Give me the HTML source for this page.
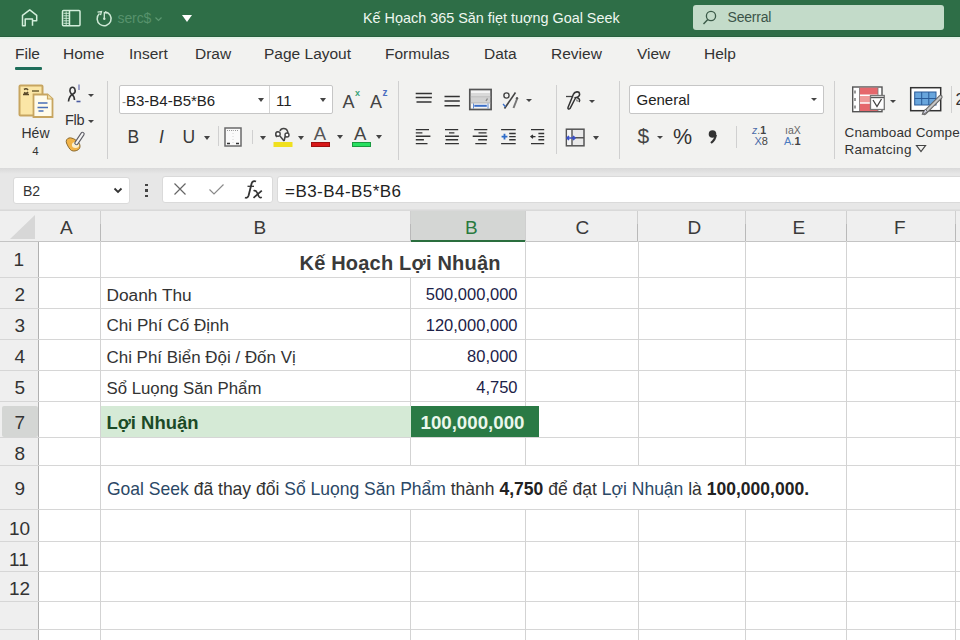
<!DOCTYPE html>
<html><head><meta charset="utf-8">
<style>
*{margin:0;padding:0;box-sizing:border-box}
html,body{width:960px;height:640px;overflow:hidden;background:#fff;font-family:"Liberation Sans",sans-serif;color:#333}
.a{position:absolute;white-space:nowrap;line-height:normal}
#titlebar{left:0;top:0;width:960px;height:37px;background:#2e6e47}
#tabsbar{left:0;top:37px;width:960px;height:131px;background:#f2f2f0}
#band{left:0;top:168px;width:960px;height:43px;background:#e7e7e7}
.tab{font-size:15.5px;color:#333;top:44.7px}
.box{background:#fff;border:1px solid #c9c9c9;border-radius:2px}
.sep{width:1px;background:#d0d0d0}
.arr{width:0;height:0;border-left:3.5px solid transparent;border-right:3.5px solid transparent;border-top:4px solid #444}
.chb{top:211px;height:31px;background:#efefef;border-right:1px solid #cfcfcf;border-bottom:1px solid #c4c4c4}
.chl{top:216.6px;font-size:19px;color:#3a3a3a}
.rh{left:0;width:39px;background:#efefef;border-right:1px solid #bdbdbd;border-bottom:1px solid #d4d4d4}
.rn{font-size:19px;color:#333}
.hl{left:0;width:960px;height:1px;background:#d6d6d6}
.vl{width:1px;background:#d3d3d3}
.cell{font-size:17.3px;color:#333}
.val{font-size:16.5px;color:#1c2248}
</style></head><body>
<!-- TITLE BAR -->
<div class="a" id="titlebar"></div>
<!-- home icon -->
<svg class="a" style="left:0;top:0" width="90" height="37" viewBox="0 0 90 37">
 <path d="M32.5 20.75H36.7V15.3L29.75 9.9L22.5 15.3V25.75H25.2V19.1H32.5V25.75" fill="none" stroke="#d3eedb" stroke-width="1.5" stroke-linejoin="round"/>
 <rect x="62.5" y="10.5" width="17.5" height="15.2" rx="1" fill="none" stroke="#d3eedb" stroke-width="1.5"/>
 <path d="M69.5 10.5V25.7" stroke="#d3eedb" stroke-width="1.5"/>
 <path d="M66.2 11.5V25" stroke="#d3eedb" stroke-width="0.9"/>
 <path d="M63.5 13.3h5.5M63.5 15.8h5.5M63.5 18.3h5.5M63.5 20.8h5.5M63.5 23.3h5.5" stroke="#d3eedb" stroke-width="0.9"/>
</svg>
<!-- clock icon -->
<svg class="a" style="left:92px;top:6px" width="76" height="24" viewBox="0 0 76 24">
 <path d="M7.5 7.5A7 7 0 1 0 13 5.8" fill="none" stroke="#cfe9d6" stroke-width="1.5"/>
 <path d="M5.5 6.2L9.5 5.5L8.5 9.2" fill="none" stroke="#cfe9d6" stroke-width="1.3"/>
 <path d="M12.3 12.7V6.5L15.5 7.2" fill="none" stroke="#cfe9d6" stroke-width="1.3"/>
 <circle cx="12.3" cy="12.7" r="1.2" fill="#cfe9d6"/>
 <path d="M63.5 11.5L66.5 14.5L69.5 11.5" fill="none" stroke="#5d9872" stroke-width="1.2"/>
</svg>
<div class="a" style="left:117.5px;top:9.5px;font-size:14px;letter-spacing:-0.1px;color:#57926c">serc$</div>
<div class="a" style="left:182px;top:15px;width:0;height:0;border-left:5.5px solid transparent;border-right:5.5px solid transparent;border-top:7px solid #fff"></div>
<div class="a" id="ttl" style="left:363px;top:9.9px;font-size:14.4px;color:#eef7f0">Kế Họach 365 Săn fiẹt tuợng Goal Seek</div>
<div class="a" style="left:693px;top:5px;width:251px;height:25px;background:#c3dbc9;border-radius:3px"></div>
<svg class="a" style="left:702px;top:10px" width="16" height="15" viewBox="0 0 16 15"><circle cx="9" cy="6" r="4.6" fill="none" stroke="#3b5a48" stroke-width="1.3"/><path d="M5.8 9.5L1.5 14" stroke="#3b5a48" stroke-width="1.4"/></svg>
<div class="a" id="srch" style="left:727.5px;top:9.2px;font-size:14px;letter-spacing:-0.2px;color:#3b5448">Seerral</div>

<!-- TABS + RIBBON -->
<div class="a" id="tabsbar"></div>
<div class="a" style="left:0;top:35.5px;width:960px;height:2px;background:#27613e"></div>
<div class="a" style="left:0;top:37px;width:960px;height:2px;background:#e4f2e8"></div>
<div class="a tab" id="tFile" style="left:15px">File</div>
<div class="a" style="left:15px;top:67px;width:27px;height:3px;background:#1f6e5a;border-radius:1px"></div>
<div class="a tab" id="tHome" style="left:63px">Home</div>
<div class="a tab" id="tIns" style="left:129px">Insert</div>
<div class="a tab" id="tDraw" style="left:195px">Draw</div>
<div class="a tab" id="tPL" style="left:264px">Page Layout</div>
<div class="a tab" id="tForm" style="left:385px">Formulas</div>
<div class="a tab" id="tData" style="left:484px">Data</div>
<div class="a tab" id="tRev" style="left:551px">Review</div>
<div class="a tab" id="tView" style="left:637px">View</div>
<div class="a tab" id="tHelp" style="left:704px">Help</div>
<!-- Clipboard group -->
<svg class="a" style="left:17px;top:83px" width="40" height="37" viewBox="0 0 40 37">
 <rect x="2.5" y="2.5" width="23" height="30" rx="1" fill="#fbe6a6" stroke="#c7a560" stroke-width="2"/>
 <path d="M7 6.5c1.5-1 3-1 4 0.5M7 9.5c1.5 1 3 1 4-0.5M6 11.5h6" stroke="#5a4a2a" stroke-width="1.6" fill="none"/>
 <path d="M15 8h7" stroke="#7a6a3a" stroke-width="1.6"/>
 <path d="M16.5 11.5H30.5L35.5 16V34H16.5Z" fill="#fffbea" stroke="#c7a560" stroke-width="1.8"/>
 <path d="M30.5 11.5V16H35.5" fill="#f4e2a8" stroke="#c7a560" stroke-width="1.2"/>
 <path d="M21 20h9.5M20.5 24.5h10.5M21.5 28h5" stroke="#4a70b8" stroke-width="1.6"/>
</svg>
<div class="a" id="hew" style="left:21.5px;top:124.5px;font-size:14px;color:#333">Héw</div>
<div class="a" style="left:32.3px;top:144.5px;font-size:11.5px;color:#333">4</div>
<svg class="a" style="left:62px;top:82px" width="24" height="24" viewBox="0 0 24 24">
 <path d="M6.5 19.5C7 15 9 13 11 12C13 11 13.5 9 13 7.5C12.5 5.5 10.5 5 9.5 5.5C7.5 6.5 7.5 10 9 11.5C11 13 12.5 14 12.5 18" fill="none" stroke="#333" stroke-width="1.6"/>
 <path d="M17 2.5V8" stroke="#7a80b8" stroke-width="1.4"/>
 <path d="M14.5 19.5h4" stroke="#4a5aa0" stroke-width="1.6"/>
</svg>
<div class="a arr" style="left:87.5px;top:93.8px;border-top-width:3.5px"></div>
<div class="a" id="flb" style="left:65px;top:112px;font-size:14.5px;color:#333;letter-spacing:-0.3px">Flb</div>
<div class="a arr" style="left:87.5px;top:119.8px;border-top-width:3.5px"></div>
<svg class="a" style="left:62px;top:130px" width="26" height="26" viewBox="0 0 26 26">
 <path d="M4.5 13C3.5 10.5 5 8.5 7 8C9 7.5 11 8.5 13 9.5L16.5 12.5C18.5 14.5 18.5 18 16.5 19.5C14.5 21 11.5 21.5 9.5 20.5C7.5 19.5 5.5 15.5 4.5 13Z" fill="#f2b448" stroke="#8a6a30" stroke-width="1"/>
 <ellipse cx="13.5" cy="15" rx="3.6" ry="3" fill="#fbefcf"/>
 <path d="M14.5 13L20.5 4" stroke="#5e5e66" stroke-width="4.4" stroke-linecap="round"/>
 <path d="M14.5 13L20.5 4" stroke="#f4f4f4" stroke-width="2.2" stroke-linecap="round"/>
</svg>
<div class="a sep" style="left:107px;top:81px;height:78px;background:#cfcfcf"></div>

<!-- Font group -->
<div class="a" style="left:118.5px;top:85.3px;width:214px;height:28.5px;background:#fff;border:1px solid #c6c6c6;border-radius:2px"></div>
<div class="a" style="left:269px;top:86px;width:1px;height:27px;background:#d4d4d4"></div>
<div class="a" id="fnt" style="left:122px;top:92px;font-size:15px;color:#222"><span style="color:#888;font-size:12px">-</span>B3-B4-B5*B6</div>
<div class="a arr" style="left:257.5px;top:98px;border-left-width:3.5px;border-right-width:3.5px;border-top-width:4px"></div>
<div class="a" id="sz" style="left:276px;top:92px;font-size:15px;color:#222">11</div>
<div class="a arr" style="left:320px;top:98px"></div>
<div class="a" style="left:342.5px;top:92.3px;font-size:18px;color:#444">A</div>
<div class="a" style="left:355px;top:88px;font-size:9px;color:#3aa37a;font-weight:bold">x</div>
<div class="a" style="left:370px;top:92.3px;font-size:18px;color:#444">A</div>
<div class="a" style="left:382.5px;top:87px;font-size:10px;color:#4a6ec0;font-weight:bold">z</div>
<div class="a" style="left:127.5px;top:127px;font-size:17.5px;color:#3a3a3a">B</div>
<div class="a" style="left:159px;top:127px;font-size:17.5px;color:#3a3a3a;font-style:italic">I</div>
<div class="a" style="left:182.5px;top:127px;font-size:17.5px;color:#3a3a3a">U</div>
<div class="a arr" style="left:203.5px;top:136px;border-left-width:3.6px;border-right-width:3.6px;border-top-width:4.5px"></div>
<div class="a sep" style="left:218px;top:126px;height:20px"></div>
<svg class="a" style="left:224px;top:126.5px" width="18" height="20" viewBox="0 0 18 20">
 <rect x="1" y="1" width="16" height="18" fill="#fafafa" stroke="#6a6a6a" stroke-width="1.5"/>
 <path d="M3 3.5h12" stroke="#999" stroke-width="1" stroke-dasharray="1 1"/>
 <path d="M9 3v14" stroke="#ccc" stroke-width="0.8" stroke-dasharray="1 2"/>
 <path d="M3 16.5h3M12 16.5h3" stroke="#333" stroke-width="1.5"/>
</svg>
<div class="a sep" style="left:252px;top:130px;height:14px"></div>
<div class="a arr" style="left:260px;top:135.8px;border-left-width:3.4px;border-right-width:3.4px;border-top-width:4.2px"></div>
<svg class="a" style="left:273px;top:127px" width="20" height="21" viewBox="0 0 20 21">
 <path d="M4 10C2 8 3 5 5 5M7 4C8 1 13 0.5 14.5 4C15.5 6 14 9 12 10L11 14" fill="none" stroke="#444" stroke-width="1.6"/>
 <circle cx="5" cy="7" r="2.2" fill="#fff" stroke="#444" stroke-width="1.4"/>
 <circle cx="14" cy="8" r="2" fill="#fff" stroke="#444" stroke-width="1.4"/>
 <path d="M7 9L11 14" stroke="#444" stroke-width="1.4"/>
 <rect x="0.5" y="15" width="19" height="5" fill="#f0e01e"/>
</svg>
<div class="a arr" style="left:297.5px;top:136px;border-left-width:3.3px;border-right-width:3.3px;border-top-width:4px"></div>
<div class="a" style="left:313.8px;top:122.5px;font-size:18.5px;color:#555">A</div>
<div class="a" style="left:311px;top:141.8px;width:19px;height:5px;background:#d81818;border:0.5px solid #a01010"></div>
<div class="a arr" style="left:336.8px;top:135.3px;border-left-width:3.3px;border-right-width:3.3px;border-top-width:4px"></div>
<div class="a" style="left:354px;top:122.5px;font-size:18.5px;color:#444">A</div>
<div class="a" style="left:352px;top:141.8px;width:18.7px;height:5px;background:#28e060;border:0.5px solid #1a9a40"></div>
<div class="a arr" style="left:376.3px;top:135.3px;border-left-width:3.3px;border-right-width:3.3px;border-top-width:4px"></div>
<div class="a sep" style="left:398px;top:81px;height:79px"></div>

<!-- Alignment group -->
<svg class="a" style="left:414px;top:86px" width="122" height="26" viewBox="414 86 122 26">
 <path d="M415.7 93.5h16.2M415.7 97.5h16.2M416.5 101.9h15" stroke="#333" stroke-width="1.5"/>
 <path d="M444.5 96.5h15.3M444.5 100.9h15.3M444.5 105.7h15.3" stroke="#333" stroke-width="1.5"/>
 <rect x="469.8" y="89.5" width="21.3" height="20" fill="#f4f4f4" stroke="#555" stroke-width="1.7"/>
 <rect x="471" y="93" width="19" height="4" fill="#d9d9d9"/>
 <rect x="471" y="97.5" width="19" height="5.5" fill="#d2d2d2"/>
 <path d="M470.5 97h20M470.5 103h20" stroke="#aaa" stroke-width="0.8"/>
 <path d="M474.3 105.8h12.5" stroke="#3a6ec8" stroke-width="2"/>
 <path d="M473.5 103.5v5M488 103.5v5" stroke="#3a6ec8" stroke-width="0.8"/>
 <path d="M486 101l1.5-2.5" stroke="#888" stroke-width="1.4"/>
 <circle cx="506.5" cy="95.5" r="2.6" fill="none" stroke="#444" stroke-width="1.4"/>
 <path d="M515.5 92.5L504.5 108.5" stroke="#444" stroke-width="1.6"/>
 <path d="M503 104c1 1 2 2 2.5 3" stroke="#3a6ec8" stroke-width="1.3" fill="none"/>
 <path d="M517 99l-3.5 9" stroke="#777" stroke-width="2"/>
 <circle cx="517" cy="98.3" r="1.2" fill="#555"/>
</svg>
<div class="a arr" style="left:525.8px;top:99.2px;border-left-width:3.4px;border-right-width:3.4px;border-top-width:3.8px"></div>
<svg class="a" style="left:414px;top:127px" width="134" height="19" viewBox="414 127 134 19">
 <g stroke="#333" stroke-width="1.4">
 <path d="M415.8 129.6h13.2M415.8 132.9h6.6M415.8 136.3h14.6M415.8 139.8h8.1M415.8 143.6h11.7"/>
 <path d="M445 129.6h13.2M449 132.9h5.4M445 136.3h13.9M445.7 139.8h12.4M445 143.6h13.9"/>
 <path d="M474.2 129.6h13.1M478.5 132.9h8M472.7 136.3h14.6M478.2 139.8h8.7M475.3 143.6h11.2"/>
 <path d="M501.1 129.6h14.6M509.2 133.5h6.5M509.2 136.6h6.5M509.2 139.8h6.5M501.1 143.6h14.6"/>
 <path d="M531 129.6h13.2M538.4 133.5h5.8M538.4 136.6h5.8M538.4 139.8h5.8M531 143.6h13.2"/>
 </g>
 <path d="M501.6 136.6h5.8M504.5 133.7v5.8" stroke="#2e6cc8" stroke-width="1.8"/>
 <path d="M531 136.6h4.5M533 135l-2 1.6 2 1.6" stroke="#333" stroke-width="1.3" fill="none"/>
</svg>
<div class="a sep" style="left:555.5px;top:85px;height:69px"></div>
<svg class="a" style="left:564px;top:90px" width="20" height="22" viewBox="0 0 20 22">
 <path d="M2 6.5h6" stroke="#444" stroke-width="1.3"/>
 <path d="M9.5 4C11 1.5 15 1 15.5 3.5C16 5.5 14 7 12.5 7.5C15 8 16.5 10 15 12" fill="none" stroke="#333" stroke-width="1.6"/>
 <path d="M9.5 4L4 17.5C3.5 19 5 19.5 6 18.5L12 7" fill="none" stroke="#333" stroke-width="1.5"/>
 <path d="M12.5 9.5L13.5 11.5" stroke="#777" stroke-width="1.4"/>
</svg>
<div class="a arr" style="left:588.5px;top:99.5px;border-left-width:3.3px;border-right-width:3.3px;border-top-width:3.6px"></div>
<svg class="a" style="left:564.5px;top:127.5px" width="20" height="19" viewBox="0 0 20 19">
 <rect x="1.4" y="1.2" width="17.6" height="16.6" fill="#e9e9e9" stroke="#555" stroke-width="1.5"/>
 <rect x="2.2" y="2" width="5" height="15" fill="#f5f5f5"/>
 <path d="M7 1.2V17.8M7 9.8H19" stroke="#555" stroke-width="1.4"/>
 <path d="M2 10h8M4 8l-2 2 2 2M8 8l2 2-2 2" stroke="#3a50c8" stroke-width="1.6" fill="none"/>
</svg>
<div class="a arr" style="left:593px;top:136px;border-left-width:3.5px;border-right-width:3.5px;border-top-width:4px"></div>
<div class="a sep" style="left:619px;top:81px;height:78px"></div>

<!-- Number group -->
<div class="a" style="left:629.2px;top:85.3px;width:195px;height:29px;background:#fff;border:1px solid #c6c6c6;border-radius:2px"></div>
<div class="a" id="gen" style="left:636.5px;top:91.2px;font-size:15px;color:#222">General</div>
<div class="a arr" style="left:810.6px;top:98.3px;border-left-width:3.5px;border-right-width:3.5px;border-top-width:3.8px"></div>
<div class="a" style="left:637.5px;top:124px;font-size:21px;color:#444">$</div>
<div class="a arr" style="left:656.7px;top:136px;border-left-width:3.2px;border-right-width:3.2px;border-top-width:3.6px"></div>
<div class="a" style="left:673px;top:125.3px;font-size:21.5px;letter-spacing:-0.5px;color:#333">%</div>
<svg class="a" style="left:707px;top:129px" width="12" height="16" viewBox="0 0 12 16"><circle cx="5.5" cy="5" r="3.8" fill="#333"/><path d="M8.8 5.8C8.5 9 7 11.5 4 14" stroke="#333" stroke-width="2.2" fill="none"/></svg>
<div class="a sep" style="left:735.5px;top:126px;height:22px"></div>
<div class="a" style="left:752px;top:125px;font-size:10.5px;line-height:10px;color:#4a6aa8;font-style:italic">z<span style="color:#666;font-style:normal">.</span><span style="color:#444;font-style:normal;font-weight:bold">1</span></div>
<div class="a" style="left:754.5px;top:136px;font-size:11px;line-height:11px;color:#4a6aa8">X<span style="color:#444">8</span></div>
<div class="a" style="left:785px;top:125px;font-size:10.5px;line-height:10px;color:#666">ıaX</div>
<div class="a" style="left:784px;top:136px;font-size:11px;line-height:11px;color:#4a7ac0">A<span style="color:#444">.</span><span style="color:#444;font-weight:bold">1</span></div>
<div class="a sep" style="left:834px;top:81px;height:78px"></div>

<!-- Styles group -->
<svg class="a" style="left:851px;top:85px" width="36" height="28" viewBox="0 0 36 28">
 <rect x="1.7" y="2" width="29.3" height="24.7" fill="#fff" stroke="#555" stroke-width="1.4"/>
 <rect x="8.5" y="2.7" width="18.5" height="23.3" fill="#e5676c"/><rect x="8.5" y="10.5" width="18.5" height="7.5" fill="#ef9a9a"/>
 <path d="M8.5 10.3h18.5M8.5 18h18.5" stroke="#fff" stroke-width="1.5"/>
 <path d="M8.5 2.7V26M27 2.7V26" stroke="#777" stroke-width="0.8"/>
 <path d="M4 5.5v3M4 13v3M4 20.5v3" stroke="#555" stroke-width="1.2"/>
 <rect x="19.5" y="10.5" width="13.8" height="14" fill="#fff" stroke="#777" stroke-width="1.3"/>
 <path d="M20 12.5h13" stroke="#555" stroke-width="1.4"/>
 <path d="M22 15l4 6.5l4.5-7.5" fill="none" stroke="#444" stroke-width="1.3"/>
</svg>
<div class="a arr" style="left:890.2px;top:99.5px;border-left-width:3.4px;border-right-width:3.4px;border-top-width:3.6px"></div>
<svg class="a" style="left:908px;top:85px" width="36" height="31" viewBox="0 0 36 31">
 <rect x="2.7" y="2.7" width="30" height="23" fill="#fff" stroke="#333" stroke-width="1.5"/>
 <rect x="6.7" y="7" width="21.3" height="13" fill="#68a5dc" stroke="#2a5a98" stroke-width="1"/>
 <path d="M13.7 7v13M20.8 7v13M6.7 13.5h21.3" stroke="#2a5a98" stroke-width="1"/>
 <path d="M32.5 12L16.5 28" stroke="#666" stroke-width="4.2" stroke-linecap="round"/>
 <path d="M32.5 12L16.5 28" stroke="#c8c8c8" stroke-width="2.2" stroke-linecap="round"/>
 <path d="M17.5 24L14 29.5L19.5 27Z" fill="#d8d8e8" stroke="#555" stroke-width="0.8"/>
</svg>
<div class="a sep" style="left:951px;top:86px;height:27px"></div>
<div class="a" style="left:955.5px;top:91px;font-size:16px;color:#333">2</div>
<div class="a" id="cn" style="left:844.5px;top:124.5px;font-size:13.5px;color:#333;letter-spacing:0.15px">Cnamboad Compe</div>
<div class="a" id="ram" style="left:844.5px;top:141.5px;font-size:13.5px;color:#333;letter-spacing:0.3px">Ramatcing</div>
<svg class="a" style="left:915px;top:144px" width="12" height="9" viewBox="0 0 12 9"><path d="M1.5 1.5h9L6 7.5Z" fill="none" stroke="#444" stroke-width="1.2"/></svg>


<!-- GRAY BAND + FORMULA BAR -->
<div class="a" id="band"></div>
<div class="a" style="left:0;top:168px;width:960px;height:6px;background:linear-gradient(#d9d9d9,#e7e7e7)"></div>
<div class="a box" style="left:13px;top:176.5px;width:117px;height:27px;border-color:#dadada;border-radius:3px"></div>
<div class="a" id="nb" style="left:23px;top:183.4px;font-size:14px;color:#333">B2</div>
<svg class="a" style="left:113px;top:187px" width="10" height="7" viewBox="0 0 10 7"><path d="M1.5 1.5L5 5L8.5 1.5" fill="none" stroke="#333" stroke-width="1.8"/></svg>
<div class="a" style="left:145px;top:183.7px;width:3px;height:2.5px;background:#444"></div>
<div class="a" style="left:145px;top:189.2px;width:3px;height:2.5px;background:#444"></div>
<div class="a" style="left:145px;top:194.7px;width:3px;height:2.5px;background:#444"></div>
<div class="a box" style="left:162px;top:176px;width:111px;height:27px;border-color:#dadada;border-radius:3px"></div>
<svg class="a" style="left:173px;top:182px" width="14" height="14" viewBox="0 0 14 14"><path d="M1.5 1.5L12.5 12.5M12.5 1.5L1.5 12.5" stroke="#666" stroke-width="1.2"/></svg>
<svg class="a" style="left:208px;top:183px" width="17" height="13" viewBox="0 0 17 13"><path d="M1.5 6.5L6 11L15.5 1.5" fill="none" stroke="#8a8a8a" stroke-width="1.2"/></svg>
<svg class="a" style="left:240px;top:178px" width="26" height="24" viewBox="0 0 26 24">
 <path d="M5 19.5C6.5 20.3 8 19.5 8.6 17.5L11.6 5.5C12.2 3.5 14 2.5 16 3.5" fill="none" stroke="#333" stroke-width="1.8"/>
 <path d="M7.5 8.3h6.5" stroke="#333" stroke-width="1.3"/>
 <path d="M13.5 12.8C15 12.2 16.2 12.8 17 14.5L18.8 18.3C19.5 19.6 20.6 19.9 21.8 19.3" fill="none" stroke="#333" stroke-width="1.7"/>
 <path d="M21.8 12.6L13.5 19.8" stroke="#333" stroke-width="1.7"/>
</svg>
<div class="a box" style="left:277px;top:176px;width:690px;height:27px;border-color:#dadada;border-radius:3px"></div>
<div class="a" id="fx" style="left:285px;top:182.1px;font-size:17px;letter-spacing:0.45px;color:#222">=B3-B4-B5*B6</div>

<!-- COLUMN HEADERS -->
<div class="a" style="left:0;top:211px;width:39px;height:31px;background:#efefef;border-right:1px solid #c8c8c8;border-bottom:1px solid #c4c4c4"></div>
<svg class="a" style="left:9px;top:214px" width="27" height="26" viewBox="0 0 27 26"><path d="M26 1V25H1Z" fill="#d7d7d7"/></svg>
<div class="a chb" style="left:38px;width:63px"></div>
<div class="a chb" style="left:101px;width:310px"></div>
<div class="a chb" style="left:411px;width:115px;background:#d4d6d4;border-bottom:2px solid #2a6e3e"></div>
<div class="a chb" style="left:526px;width:112px"></div>
<div class="a chb" style="left:638px;width:108px"></div>
<div class="a chb" style="left:746px;width:101px"></div>
<div class="a chb" style="left:847px;width:109px"></div>
<div class="a chb" style="left:956px;width:10px"></div>
<div class="a" style="left:0;top:209px;width:960px;height:2px;background:linear-gradient(#e2e2e2,#d6d6d6)"></div>
<div class="a" style="left:100px;top:224px;width:1px;height:17px;background:#b9b9b9"></div>
<div class="a" style="left:410px;top:224px;width:1px;height:17px;background:#b9b9b9"></div>
<div class="a" style="left:637px;top:224px;width:1px;height:17px;background:#b9b9b9"></div>
<div class="a" style="left:745px;top:224px;width:1px;height:17px;background:#b9b9b9"></div>
<div class="a" style="left:846px;top:224px;width:1px;height:17px;background:#b9b9b9"></div>
<div class="a" style="left:955px;top:224px;width:1px;height:17px;background:#b9b9b9"></div>
<div class="a chl" style="left:60px">A</div>
<div class="a chl" style="left:253.5px">B</div>
<div class="a chl" style="left:465px;color:#2a7a3e">B</div>
<div class="a chl" style="left:575.5px">C</div>
<div class="a chl" style="left:687.5px">D</div>
<div class="a chl" style="left:792.5px">E</div>
<div class="a chl" style="left:894px">F</div>

<!-- ROW HEADERS -->
<div class="a" style="left:0;top:242px;width:39px;height:398px;background:#efefef;border-right:1px solid #b0b0b0"></div>
<div class="a" style="left:1.5px;top:406px;width:36.5px;height:31px;background:#d4d6d4;border-radius:2px"></div>
<div class="a rn" style="left:13.5px;top:248.5px">1</div>
<div class="a rn" style="left:14.5px;top:283.5px">2</div>
<div class="a rn" style="left:14.5px;top:315px">3</div>
<div class="a rn" style="left:14.5px;top:345.5px">4</div>
<div class="a rn" style="left:14.5px;top:377px">5</div>
<div class="a rn" style="left:14.5px;top:411.5px">7</div>
<div class="a rn" style="left:14.5px;top:443px">8</div>
<div class="a rn" style="left:14.5px;top:478px">9</div>
<div class="a rn" style="left:9px;top:517.5px">10</div>
<div class="a rn" style="left:9px;top:548.5px">11</div>
<div class="a rn" style="left:9px;top:578px">12</div>

<!-- GRID -->
<div class="a hl" style="top:277px"></div>
<div class="a hl" style="top:308px"></div>
<div class="a hl" style="top:339px"></div>
<div class="a hl" style="top:370px"></div>
<div class="a hl" style="top:401px"></div>
<div class="a hl" style="top:437px"></div>
<div class="a hl" style="top:465px"></div>
<div class="a hl" style="top:509px"></div>
<div class="a hl" style="top:541px"></div>
<div class="a hl" style="top:571px"></div>
<div class="a hl" style="top:601px"></div>
<div class="a hl" style="top:629px"></div>
<div class="a vl" style="left:100px;top:241px;height:399px"></div>
<div class="a vl" style="left:410px;top:277px;height:188px"></div>
<div class="a vl" style="left:410px;top:510px;height:130px"></div>
<div class="a vl" style="left:525px;top:241px;height:224px"></div>
<div class="a vl" style="left:525px;top:510px;height:130px"></div>
<div class="a vl" style="left:638px;top:241px;height:224px"></div>
<div class="a vl" style="left:638px;top:510px;height:130px"></div>
<div class="a vl" style="left:745px;top:241px;height:224px"></div>
<div class="a vl" style="left:745px;top:510px;height:130px"></div>
<div class="a vl" style="left:846px;top:241px;height:399px"></div>
<div class="a vl" style="left:955px;top:241px;height:399px"></div>

<!-- CELLS -->
<div class="a" id="title1" style="left:299.5px;top:251.7px;font-size:20px;letter-spacing:0.2px;font-weight:bold;color:#3a3a3a">Kế Hoạch Lợi Nhuận</div>
<div class="a cell" id="c2" style="left:106.5px;top:285px">Doanh Thu</div>
<div class="a cell" id="c3" style="left:106.5px;top:316.4px;font-size:17.1px">Chi Phí Cố Định</div>
<div class="a cell" id="c4" style="left:106.5px;top:347.7px;font-size:16.95px">Chi Phí Biển Đội / Đốn Vị</div>
<div class="a cell" id="c5" style="left:106.5px;top:378.5px;font-size:16.8px">Sổ Luọng Săn Phẩm</div>
<div class="a val" id="v2" style="right:442.5px;top:284.6px">500,000,000</div>
<div class="a val" id="v3" style="right:442.5px;top:315.8px">120,000,000</div>
<div class="a val" id="v4" style="right:442.5px;top:346.7px">80,000</div>
<div class="a val" id="v5" style="right:442.5px;top:377.6px">4,750</div>
<div class="a" style="left:101px;top:406px;width:310px;height:31px;background:#d5ead6"></div>
<div class="a" style="left:411px;top:406px;width:128px;height:31px;background:#2a7a45"></div>
<div class="a" id="r7l" style="left:106.5px;top:412px;font-size:18.45px;font-weight:bold;color:#1b4a26">Lợi Nhuận</div>
<div class="a" id="r7v" style="left:420.5px;top:411.8px;font-size:18.7px;font-weight:bold;color:#eaf7ec">100,000,000</div>
<div class="a" id="r9" style="left:107px;top:479.1px;font-size:17.53px;color:#333"><span style="color:#2b4866">Goal Seek</span> đã thay đổi <span style="color:#2b4866">Sổ Luọng Săn Phẩm</span> thành <b style="color:#222">4,750</b> để đạt <span style="color:#2b4866">Lợi Nhuận</span> là <b style="color:#222">100,000,000.</b></div>
</body></html>
